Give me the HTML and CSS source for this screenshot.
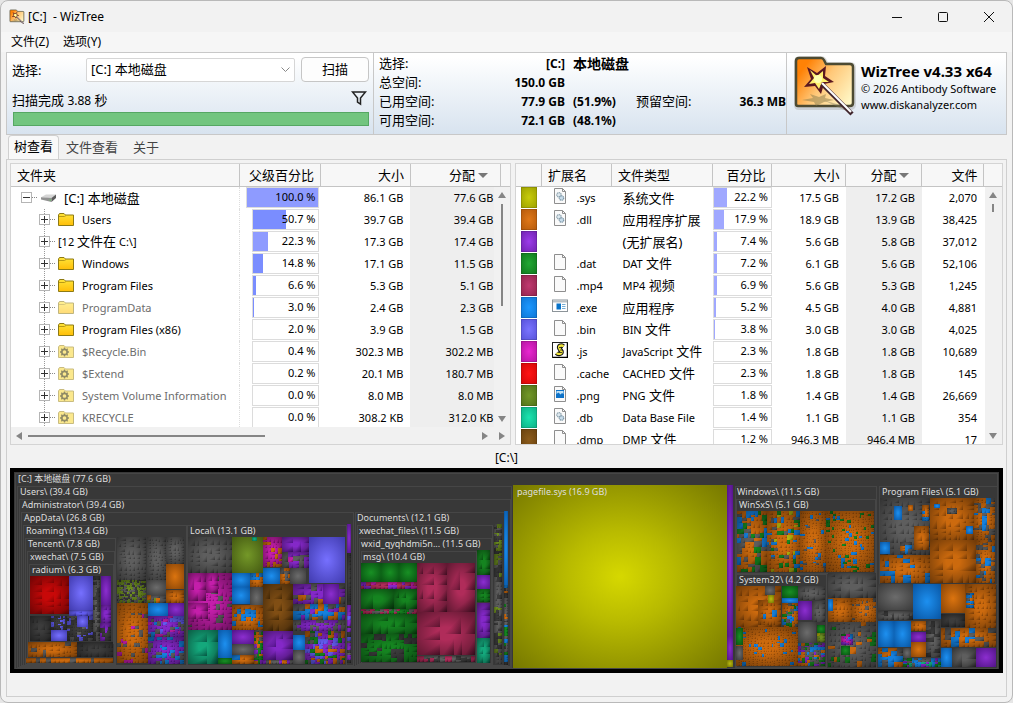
FILE: index.html
```html
<!DOCTYPE html>
<html lang="zh-CN">
<head>
<meta charset="utf-8">
<title>[C:] - WizTree</title>
<link rel="stylesheet" href="styles.css">
</head>
<body>
<svg class="defs" aria-hidden="true">
  <defs>
    <linearGradient id="gFolder" x1="0" y1="0" x2="0" y2="1"><stop offset="0" stop-color="#ffe53a"/><stop offset="1" stop-color="#ffbe08"/></linearGradient>
    <linearGradient id="gLogo" x1="0" y1="0.2" x2="1" y2="0.8"><stop offset="0.1" stop-color="#ff8206"/><stop offset="0.5" stop-color="#ffc879"/><stop offset="1" stop-color="#fff6c4"/></linearGradient>
  </defs>
  <symbol id="folder" viewBox="0 0 16 13">
    <path d="M.5 12.5V2L1.5.5H6L7.5 2H15.5V12.5Z" fill="url(#gFolder)" stroke="#8d7a14"/>
    <path d="M1 3.5H6.5L8 2.5" fill="none" stroke="#b89a16"/>
  </symbol>
  <symbol id="gear" viewBox="0 0 16 13">
    <path d="M.5 12.5V2L1.5.5H6L7.5 2H15.5V12.5Z" fill="#fbe88d" stroke="#c9bc80"/>
    <circle cx="6.5" cy="7" r="2.7" fill="none" stroke="#8f8a66" stroke-width="1.7"/>
    <path d="M6.500 2.500V4M6.500 10V11.500M2 7H3.500M9.500 7H11M3.300 3.800L4.400 4.900M8.600 9.100L9.700 10.200M3.300 10.200L4.400 9.100M8.600 4.900L9.700 3.800" stroke="#8f8a66" stroke-width="1.3"/>
  </symbol>
  <symbol id="drive" viewBox="0 0 15 8">
    <path d="M0 3.200L5 .5H15L10.500 4.500Z" fill="#d6d6d6"/><path d="M0 3.200L10.500 4V8L0 5.500Z" fill="#929292"/><path d="M10.500 4L15 .5V4L10.500 8Z" fill="#5c5c5c"/><path d="M8.500 6h1.500" stroke="#5fd35f"/>
  </symbol>
  <symbol id="page" viewBox="0 0 12 16">
    <path d="M.5.5H8.500L11.500 3.500V15.500H.5Z" fill="#fafafa" stroke="#8e8e8e"/><path d="M8.500.5V3.500H11.500" fill="none" stroke="#8e8e8e"/>
  </symbol>
  <symbol id="cogs" viewBox="0 0 12 16">
    <path d="M.5.5H8.500L11.500 3.500V15.500H.5Z" fill="#fafafa" stroke="#8e8e8e"/><path d="M8.500.5V3.500H11.500" fill="none" stroke="#8e8e8e"/>
    <circle cx="5" cy="6.800" r="2.200" fill="#dce8ef" stroke="#92a5b0" stroke-width="1.300" stroke-dasharray="1.300 .5"/><circle cx="7.500" cy="10" r="2.200" fill="#c7dceb" stroke="#8099a8" stroke-width="1.300" stroke-dasharray="1.300 .5"/>
  </symbol>
  <symbol id="exe" viewBox="0 0 16 13">
    <rect x=".5" y=".5" width="15" height="11.500" fill="#fff" stroke="#8c9499"/><path d="M1 2H15" stroke="#b9c0c4" stroke-width="2"/><rect x="4.500" y="4" width="4.500" height="6" fill="#0873c9"/><path d="M10 5H13.500M10 7H13.500M10 9H13.500" stroke="#75aed6"/>
  </symbol>
  <symbol id="js" viewBox="0 0 16 16">
    <rect x=".5" y=".5" width="15" height="15" fill="#fff" stroke="#222"/><path d="M15.500 1V15.500H1" fill="none" stroke="#000" stroke-width="1.500"/>
    <path d="M11.500 4.500C9 2.500 6 4 7.500 6.500L9.500 9.500C10 12 6 12.500 4.500 11" fill="none" stroke="#111" stroke-width="4.500"/><path d="M11.500 4.500C9 2.500 6 4 7.500 6.500L9.500 9.500C10 12 6 12.500 4.500 11" fill="none" stroke="#efe43a" stroke-width="2.400"/><path d="M7 5.500H11M8 8H11M7 10.500H10" stroke="#222" stroke-width=".8"/>
  </symbol>
  <symbol id="png" viewBox="0 0 12 16">
    <path d="M.5.5H8.500L11.500 3.500V15.500H.5Z" fill="#fafafa" stroke="#8e8e8e"/><path d="M8.500.5V3.500H11.500" fill="none" stroke="#8e8e8e"/><rect x="2" y="4" width="8" height="8" fill="#0d72c8"/><path d="M2.500 5V8L4.500 6.500L6.500 8.500L8 7L9.500 8V5Z" fill="#bfe1f6"/>
  </symbol>
  <symbol id="logo" viewBox="0 0 66 62">
    <path d="M5 49V6Q5 3 8 3H29Q31 3 32 5L34 9H58Q61 9 61 12V48Q61 51 58 51H7Q5 51 5 49Z" fill="none" stroke="#9a9a9a" stroke-width="6" opacity=".35"/>
    <path d="M4 48V5Q4 2 7 2H29Q31 2 32 4L34 8H58Q61 8 61 11V47Q61 50 58 50H6Q4 50 4 48Z" fill="url(#gLogo)" stroke="#4c4a32" stroke-width="2.500"/>
    <path d="M10 44L21 42L18 38L27 41L34 38L33 42L42 44L32 46L24 50L22 46Z" fill="#8a7c4c" opacity=".5"/>
    <path d="M31 44L52 54L62 57L48 49Z" fill="#807a60" opacity=".4"/>
    <path d="M15 11L25 17L34 10L33 20L42 26L32 28L29 38L23 30L12 31L19 23Z" fill="#5b1820"/>
    <path d="M18 14L25 20L31 15L31 22L37 26L30 26L27 33L23 27L17 28L22 22Z" fill="#fff16d"/><circle cx="26" cy="23" r="4" fill="#ffffb0"/>
    <path d="M30 28L60 58" stroke="#40252c" stroke-width="4.400"/><path d="M30 27L59 56" stroke="#fff" stroke-width="2.200"/>
  </symbol>
</svg>

<main class="window">
  <header class="titlebar">
    <svg class="app-icon"><use href="#logo"/></svg>
    <h1 class="title">[C:]&nbsp; - WizTree</h1>
    <div class="win-buttons">
      <button class="win-btn" aria-label="最小化"><svg viewBox="0 0 12 12"><path d="M1 6.500H11"/></svg></button>
      <button class="win-btn" aria-label="最大化"><svg viewBox="0 0 12 12"><rect x="1.500" y="1.500" width="9" height="9" rx="1"/></svg></button>
      <button class="win-btn" aria-label="关闭"><svg viewBox="0 0 12 12"><path d="M1 1L11 11M11 1L1 11"/></svg></button>
    </div>
  </header>
  <nav class="menubar"><button class="menu">文件(Z)</button><button class="menu">选项(Y)</button></nav>

  <section class="summary">
    <div class="scan">
      <div class="scan-row">
        <label for="drive-select">选择:</label>
        <div class="select-wrap">
          <select id="drive-select"><option>[C:] 本地磁盘</option></select>
          <svg class="chevron" viewBox="0 0 9 6"><path d="M.5.5L4.500 4.500L8.500.5"/></svg>
        </div>
        <button class="scan-btn">扫描</button>
      </div>
      <div class="status-row">
        <span>扫描完成 <span class="num">3.88</span> 秒</span>
        <button class="filter" aria-label="筛选"><svg viewBox="0 0 16 16"><path d="M1.500 2H14.500L9.500 8V14L6.500 12V8Z"/></svg></button>
      </div>
      <div class="progress" role="progressbar" aria-valuenow="100" aria-label="扫描进度"></div>
    </div>
    <div class="info">
      <span>选择:</span><b>[C:]</b><b class="cjk">本地磁盘</b><span></span><b></b>
      <span>总空间:</span><b>150.0 GB</b><b></b><span></span><b></b>
      <span>已用空间:</span><b>77.9 GB</b><b>(51.9%)</b><span>预留空间:</span><b>36.3 MB</b>
      <span>可用空间:</span><b>72.1 GB</b><b>(48.1%)</b><span></span><b></b>
    </div>
    <div class="brand">
      <svg class="logo"><use href="#logo"/></svg>
      <div class="brand-text"><strong>WizTree v4.33 x64</strong><span>© 2026 Antibody Software</span><a href="#">www.diskanalyzer.com</a></div>
    </div>
  </section>

  <div class="tabs" role="tablist">
    <button class="tab active" role="tab" aria-selected="true">树查看</button><button class="tab" role="tab">文件查看</button><button class="tab" role="tab">关于</button>
  </div>

  <section class="sheet">
    <div class="panes">
      <div class="pane">
        <div class="view">
        <table class="grid tree">
          <colgroup><col><col class="c81"><col class="c90"><col class="c90 shade"><col class="c10"></colgroup>
          <thead><tr><th class="left">文件夹</th><th>父级百分比</th><th>大小</th><th>分配<i class="sort"></i></th><th></th></tr></thead>
          <tbody>
            <tr><td class="root"><div class="node"><button class="toggle minus" aria-label="折叠"></button><svg class="i-drive"><use href="#drive"/></svg><span class="name big">[C:] 本地磁盘</span></div></td><td><div class="bar wide"><i style="width:100%"></i><span>100.0 %</span></div></td><td>86.1 GB</td><td>77.6 GB</td><td></td></tr>
            <tr><td><div class="node"><button class="toggle" aria-label="展开"></button><svg class="i-folder"><use href="#folder"/></svg><span class="name">Users</span></div></td><td><div class="bar alt"><i style="width:50.7%"></i><span>50.7 %</span></div></td><td>39.7 GB</td><td>39.4 GB</td><td></td></tr>
            <tr><td><div class="node"><button class="toggle" aria-label="展开"></button><span class="name flush">[12 <span class="han">文件在</span> C:\]</span></div></td><td><div class="bar"><i style="width:22.3%"></i><span>22.3 %</span></div></td><td>17.3 GB</td><td>17.4 GB</td><td></td></tr>
            <tr><td><div class="node"><button class="toggle" aria-label="展开"></button><svg class="i-folder"><use href="#folder"/></svg><span class="name">Windows</span></div></td><td><div class="bar alt"><i style="width:14.8%"></i><span>14.8 %</span></div></td><td>17.1 GB</td><td>11.5 GB</td><td></td></tr>
            <tr><td><div class="node"><button class="toggle" aria-label="展开"></button><svg class="i-folder"><use href="#folder"/></svg><span class="name">Program Files</span></div></td><td><div class="bar alt"><i style="width:5%"></i><span>6.6 %</span></div></td><td>5.3 GB</td><td>5.1 GB</td><td></td></tr>
            <tr class="dim"><td><div class="node"><button class="toggle" aria-label="展开"></button><svg class="i-folder"><use href="#folder"/></svg><span class="name">ProgramData</span></div></td><td><div class="bar alt"><i style="width:1.5%"></i><span>3.0 %</span></div></td><td>2.4 GB</td><td>2.3 GB</td><td></td></tr>
            <tr><td><div class="node"><button class="toggle" aria-label="展开"></button><svg class="i-folder"><use href="#folder"/></svg><span class="name">Program Files (x86)</span></div></td><td><div class="bar"><span>2.0 %</span></div></td><td>3.9 GB</td><td>1.5 GB</td><td></td></tr>
            <tr class="dim"><td><div class="node"><button class="toggle" aria-label="展开"></button><svg class="i-gear"><use href="#gear"/></svg><span class="name">$Recycle.Bin</span></div></td><td><div class="bar"><span>0.4 %</span></div></td><td>302.3 MB</td><td>302.2 MB</td><td></td></tr>
            <tr class="dim"><td><div class="node"><button class="toggle" aria-label="展开"></button><svg class="i-gear"><use href="#gear"/></svg><span class="name">$Extend</span></div></td><td><div class="bar"><span>0.2 %</span></div></td><td>20.1 MB</td><td>180.7 MB</td><td></td></tr>
            <tr class="dim"><td><div class="node"><button class="toggle" aria-label="展开"></button><svg class="i-gear"><use href="#gear"/></svg><span class="name">System Volume Information</span></div></td><td><div class="bar"><span>0.0 %</span></div></td><td>8.0 MB</td><td>8.0 MB</td><td></td></tr>
            <tr class="dim"><td><div class="node"><button class="toggle" aria-label="展开"></button><svg class="i-gear"><use href="#gear"/></svg><span class="name">KRECYCLE</span></div></td><td><div class="bar"><span>0.0 %</span></div></td><td>308.2 KB</td><td>312.0 KB</td><td></td></tr>
          </tbody>
        </table>
        <div class="vscroll"><i class="up"></i><i class="thumb long"></i><i class="down"></i></div>
        </div>
        <div class="hscroll"><i class="lt"></i><i class="hthumb"></i><i class="rt"></i><i class="rt"></i></div>
      </div>
      <div class="pane">
        <div class="view">
        <table class="grid ext">
          <colgroup><col class="c25"><col class="c70"><col><col class="c59"><col class="c74"><col class="c76 shade"><col class="c62"><col class="c18"></colgroup>
          <thead><tr><th></th><th class="left">扩展名</th><th class="left">文件类型</th><th>百分比</th><th>大小</th><th>分配<i class="sort"></i></th><th>文件</th><th></th></tr></thead>
          <tbody>
            <tr><td><i class="chip y"></i></td><td><div class="ex"><svg><use href="#cogs"/></svg><span>.sys</span></div></td><td class="kind">系统文件</td><td><div class="bar full"><i style="width:22.2%"></i><span>22.2 %</span></div></td><td>17.5 GB</td><td>17.2 GB</td><td>2,070</td><td></td></tr>
            <tr><td><i class="chip o"></i></td><td><div class="ex"><svg><use href="#cogs"/></svg><span>.dll</span></div></td><td class="kind">应用程序扩展</td><td><div class="bar full"><i style="width:17.9%"></i><span>17.9 %</span></div></td><td>18.9 GB</td><td>13.9 GB</td><td>38,425</td><td></td></tr>
            <tr><td><i class="chip p"></i></td><td></td><td class="kind">(无扩展名)</td><td><div class="bar full"><i style="width:5%"></i><span>7.4 %</span></div></td><td>5.6 GB</td><td>5.8 GB</td><td>37,012</td><td></td></tr>
            <tr><td><i class="chip g"></i></td><td><div class="ex"><svg><use href="#page"/></svg><span>.dat</span></div></td><td class="kind"><span class="lat">DAT</span> 文件</td><td><div class="bar full"><i style="width:5%"></i><span>7.2 %</span></div></td><td>6.1 GB</td><td>5.6 GB</td><td>52,106</td><td></td></tr>
            <tr><td><i class="chip c"></i></td><td><div class="ex"><svg><use href="#page"/></svg><span>.mp4</span></div></td><td class="kind"><span class="lat">MP4</span> 视频</td><td><div class="bar full"><i style="width:5%"></i><span>6.9 %</span></div></td><td>5.6 GB</td><td>5.3 GB</td><td>1,245</td><td></td></tr>
            <tr><td><i class="chip b"></i></td><td><div class="ex"><svg class="w"><use href="#exe"/></svg><span>.exe</span></div></td><td class="kind">应用程序</td><td><div class="bar full"><i style="width:3.500%"></i><span>5.2 %</span></div></td><td>4.5 GB</td><td>4.0 GB</td><td>4,881</td><td></td></tr>
            <tr><td><i class="chip v"></i></td><td><div class="ex"><svg><use href="#page"/></svg><span>.bin</span></div></td><td class="kind"><span class="lat">BIN</span> 文件</td><td><div class="bar full"><i style="width:2%"></i><span>3.8 %</span></div></td><td>3.0 GB</td><td>3.0 GB</td><td>4,025</td><td></td></tr>
            <tr><td><i class="chip m"></i></td><td><div class="ex"><svg class="w"><use href="#js"/></svg><span>.js</span></div></td><td class="kind"><span class="lat">JavaScript</span> 文件</td><td><div class="bar full"><span>2.3 %</span></div></td><td>1.8 GB</td><td>1.8 GB</td><td>10,689</td><td></td></tr>
            <tr><td><i class="chip r"></i></td><td><div class="ex"><svg><use href="#page"/></svg><span>.cache</span></div></td><td class="kind"><span class="lat">CACHED</span> 文件</td><td><div class="bar full"><span>2.3 %</span></div></td><td>1.8 GB</td><td>1.8 GB</td><td>145</td><td></td></tr>
            <tr><td><i class="chip l"></i></td><td><div class="ex"><svg><use href="#png"/></svg><span>.png</span></div></td><td class="kind"><span class="lat">PNG</span> 文件</td><td><div class="bar full"><span>1.8 %</span></div></td><td>1.4 GB</td><td>1.4 GB</td><td>26,669</td><td></td></tr>
            <tr><td><i class="chip t"></i></td><td><div class="ex"><svg><use href="#cogs"/></svg><span>.db</span></div></td><td class="kind"><span class="lat">Data Base File</span></td><td><div class="bar full"><span>1.4 %</span></div></td><td>1.1 GB</td><td>1.1 GB</td><td>354</td><td></td></tr>
            <tr><td><i class="chip n"></i></td><td><div class="ex"><svg><use href="#page"/></svg><span>.dmp</span></div></td><td class="kind"><span class="lat">DMP</span> 文件</td><td><div class="bar full"><span>1.2 %</span></div></td><td>946.3 MB</td><td>946.4 MB</td><td>17</td><td></td></tr>
          </tbody>
        </table>
        <div class="vscroll wide"><i class="up"></i><i class="thumb"></i><i class="down"></i></div>
        </div>
      </div>
    </div>
    <p class="path">[C:\]</p>
    <svg id="treemap" class="treemap" viewBox="10 468 993 205" role="img" aria-label="磁盘空间树状图"></svg>
  </section>
</main>
<script src="treemap.js"></script>
</body>
</html>
```
FILE: styles.css
```css
* { box-sizing: border-box; }
body { margin: 0; background: #e6e6e6; color: #000; font: 12px/16px "Noto Sans", "Noto Sans CJK SC", sans-serif; }
button, select { font: inherit; color: inherit; border: 0; background: none; padding: 0; margin: 0; }
i { font-style: normal; }
svg { display: block; }
.defs { position: absolute; width: 0; height: 0; }
.window { min-height: 703px; border: 1px solid #b9b9b9; border-radius: 8px; background: #f2f2f2; display: flex; flex-direction: column; }
.titlebar { height: 31px; display: flex; align-items: center; padding-left: 8px; }
.app-icon { width: 16px; height: 16px; }
.title { margin: 0 0 0 3px; font-size: 12px; font-weight: 400; flex: 1; }
.win-buttons { display: flex; }
.win-btn { width: 46px; height: 31px; display: flex; align-items: center; justify-content: center; }
.win-btn svg { width: 12px; height: 12px; fill: none; stroke: #111; stroke-width: 1; }
.menubar { height: 20px; background: #f6f6f6; display: flex; gap: 14px; padding-left: 10px; font-size: 12px; }

.summary { display: grid; grid-template-columns: 366px 1fr 219px; gap: 1px; margin: 0 5px; border: 1px solid #c8c8c8; background: #c8c8c8; height: 83px; }
.summary > div { background: linear-gradient(#fff 5%, #eef3f8 45%, #d8e3ef); min-width: 0; overflow: hidden; }
.scan { padding: 4px 4px 0 5px; font-size: 13px; }
.scan-row { display: flex; align-items: center; height: 25px; }
.scan-row label { width: 74px; }
.select-wrap { position: relative; flex: 1; }
.select-wrap select { appearance: none; width: 100%; height: 24px; background: #fff; border: 1px solid #d6d6d6; padding: 0 20px 2px 4px; border-radius: 2px; }
.chevron { position: absolute; right: 5px; top: 9px; width: 9px; height: 6px; fill: none; stroke: #888; }
.scan-btn { margin-left: 6px; width: 68px; height: 25px; background: #fdfdfd; border: 1px solid #c6c6c6; border-radius: 4px; padding-bottom: 1px; }
.status-row { display: flex; justify-content: space-between; align-items: flex-end; height: 24px; margin: 3px 0 3px; }
.num { font-size: 12px; }
.filter { width: 18px; height: 22px; }
.filter svg { width: 16px; height: 16px; fill: none; stroke: #222; stroke-width: 1.5; }
.progress { height: 14px; margin-left: 1px; background: #72c57f; border: 1px solid #55a763; }
.info { display: grid; grid-template-columns: 100px 78px 55px 72px 70px; grid-auto-rows: 19px; column-gap: 8px; padding: 1px 0 0 5px; line-height: 19px; white-space: nowrap; }
.info span, .info .cjk { font-size: 13px; }
.info b:nth-child(5n+2), .info b:nth-child(5n) { text-align: right; }
.info .cjk { font-size: 14px; }
.brand { display: flex; padding: 3px 0 0 5px; }
.logo { width: 66px; height: 62px; margin-right: 3px; flex: none; }
.brand-text { display: flex; flex-direction: column; padding-top: 5px; font-size: 11px; white-space: nowrap; }
.brand-text strong { font-size: 15px; line-height: 20px; }
.brand-text a { color: inherit; text-decoration: none; }

.tabs { display: flex; padding: 0 7px; height: 24px; font-size: 13px; }
.tab { padding: 0 9px 2px; color: #444; }
.tab + .tab { padding: 0 8px 1px 7px; }
.tab.active { color: #000; background: #f9f9f9; border: 1px solid #d0d0d0; border-bottom: 0; border-radius: 4px 4px 0 0; padding: 0 5px 3px; }
.sheet { margin: 0 5px 5px; padding: 3px 3px 22px; border: 1px solid #cfcfcf; flex: 1; }
.panes { display: grid; grid-template-columns: 502fr 488fr; gap: 4px; }
.pane { height: 282px; background: #fff; border: 1px solid #d4d4d4; display: flex; flex-direction: column; min-width: 0; }
.view { position: relative; flex: 1; overflow: hidden; }
.grid { width: 100%; table-layout: fixed; border-collapse: collapse; }
.grid th { height: 22px; padding: 0 6px; font-weight: 400; font-size: 13px; text-align: right; background: #f7f7f7; border-right: 1px solid #c4c4c4; border-bottom: 1px solid #c4c4c4; white-space: nowrap; }
.grid th:last-child { border-right: 0; }
.grid th.left { text-align: left; }
.sort { display: inline-block; margin: 0 6px 2px 3px; border: 5px solid transparent; border-top-color: #777; border-bottom: 0; }
.grid td { height: 22px; padding: 0 7px 0 0; text-align: right; font-size: 11px; white-space: nowrap; overflow: hidden; }
.tree td:first-child { padding: 0; border-right: 1px dotted #ddd; }
.shade { background: #eee; }
.c10 { width: 10px; } .c18 { width: 18px; } .c25 { width: 25px; } .c59 { width: 59px; } .c62 { width: 62px; } .c70 { width: 70px; } .c74 { width: 74px; } .c76 { width: 76px; } .c81 { width: 81px; } .c90 { width: 90px; }
.node { display: flex; align-items: center; height: 22px; padding-left: 28px; background: repeating-linear-gradient(#999 0 1px, transparent 1px 2px) 33px 0 / 1px 22px no-repeat; }
.root .node { padding-left: 10px; background: none; }
.toggle { width: 11px; height: 11px; border: 1px solid #b5b5b5; flex: none; margin-right: 8px; background: linear-gradient(#333, #333) center / 7px 1px no-repeat, linear-gradient(#333, #333) center / 1px 7px no-repeat, #fff; }
.toggle.minus { background: linear-gradient(#333, #333) center / 7px 1px no-repeat, #fff; }
.toggle::after { content: ""; display: block; width: 5px; margin-left: 10px; border-top: 1px dotted #888; }
.i-folder, .i-gear { width: 16px; height: 13px; flex: none; }
.i-drive { width: 15px; height: 8px; margin-left: 1px; }
.name { margin-left: 8px; }
.name.flush { margin-left: 0; }
.name.big { font-size: 13px; }
.han { font-size: 13px; }
.dim td:first-child { color: #6d6d6d; }
.dim .i-folder { opacity: .55; }
.bar { position: relative; height: 21px; margin: 0 -6px 0 12px; border: 1px solid #dcdcdc; background: #fff; }
.bar.wide { margin-left: 6px; }
.bar.full { margin-left: 0; margin-right: -7px; }
.bar i { display: block; height: 100%; background: #8e9bff; }
.bar.alt i { background: #7a8dff; }
.bar.full i { background: #a0a8ff; }
.bar span { position: absolute; right: 3px; top: 1px; }
.vscroll { position: absolute; right: 0; top: 23px; bottom: 0; width: 16px; background: #f1f1f1; display: flex; flex-direction: column; align-items: center; padding: 5px 0; }
.vscroll.wide { width: 17px; }
.up { border: 4px solid transparent; border-top: 0; border-bottom: 6px solid #858585; }
.down { border: 4px solid transparent; border-bottom: 0; border-top: 6px solid #858585; margin-top: auto; }
.thumb { width: 2px; height: 8px; margin-top: 6px; background: #858585; }
.thumb.long { height: 102px; }
.hscroll { height: 17px; background: #f1f1f1; display: flex; align-items: center; padding: 0 5px; }
.lt { border: 4px solid transparent; border-left: 0; border-right: 6px solid #858585; }
.rt { border: 4px solid transparent; border-right: 0; border-left: 6px solid #858585; margin-left: 11px; }
.hthumb { width: 237px; height: 2px; background: #858585; margin: 0 auto 0 6px; }
.grid.ext td:first-child { padding: 0 4px 0 5px; }
.chip { display: block; width: 16px; height: 21px; border: 1px solid rgba(0,0,0,.15); }
.chip.y { background: radial-gradient(#c8cc0a, #a0a400); }
.chip.o { background: radial-gradient(#e07818, #b85c0c); }
.chip.p { background: radial-gradient(#9c3cea, #7424b4); }
.chip.g { background: radial-gradient(#22a834, #127c20); }
.chip.c { background: radial-gradient(#c03a70, #962650); }
.chip.b { background: radial-gradient(#1c98ff, #0f78d8); }
.chip.v { background: radial-gradient(#7a74ff, #5a54dc); }
.chip.m { background: radial-gradient(#e828d0, #b816a4); }
.chip.r { background: radial-gradient(#ff1414, #d80808); }
.chip.l { background: radial-gradient(#729828, #54741a); }
.chip.t { background: radial-gradient(#1ce4b0, #0eb488); }
.chip.n { background: radial-gradient(#8c5c1c, #6c4410); }
.grid.ext td:nth-child(2) { padding: 0; }
.ex { display: flex; align-items: center; height: 22px; padding-left: 13px; }
.ex svg { width: 12px; height: 16px; margin: 0 10px 4px 0; flex: none; }
.ex svg.w { width: 16px; margin-left: -2px; margin-right: 8px; }
.grid td.kind { text-align: left; padding: 0 0 0 11px; font-size: 13px; }
.lat { font-size: 11px; }
.path { margin: 5px 0 2px; text-align: center; line-height: 16px; }
.treemap { width: 100%; height: auto; background: #000; }
.treemap text { font-size: 9px; fill: #dedede; }
.treemap .frame { fill: none; stroke: #464646; }
```
FILE: treemap.js
```js
const NS = "http://www.w3.org/2000/svg";
const map = document.getElementById("treemap");
const add = (parent, tag, attrs) => {
  const el = document.createElementNS(NS, tag);
  for (const k in attrs) el.setAttribute(k, attrs[k]);
  parent.appendChild(el);
  return el;
};

// Cushion tones for each file type: lit centre, flat middle and dark rim.
const tones = {
  r: ["#e81010", "#c80808", "#8c0404"], b: ["#1d90f0", "#1580dc", "#07509c"], v: ["#7670ff", "#625cf0", "#3c36a8"],
  g: ["#189024", "#158420", "#074c10"], o: ["#dc740f", "#cc6a0e", "#804006"], p: ["#8c2ed0", "#8428c8", "#4c1280"],
  m: ["#cc20b0", "#c41eaa", "#700c64"], c: ["#c03464", "#b02c5a", "#5c1430"], t: ["#16b888", "#14a87c", "#06604a"],
  y: ["#bcbc10", "#b4b40c", "#6c6c00"], l: ["#749828", "#6c8c20", "#405410"], n: ["#8c5618", "#804e14", "#482a04"],
  k: ["#6c6c6c", "#5e5e5e", "#363636"], d: ["#484848", "#3c3c3c", "#282828"]
};
const defs = add(map, "defs", {});
for (const k in tones) {
  const deep = add(defs, "radialGradient", { id: "t-" + k, r: 0.75 });
  add(deep, "stop", { offset: 0, "stop-color": tones[k][0] });
  add(deep, "stop", { offset: 1, "stop-color": tones[k][2] });
  const flat = add(defs, "linearGradient", { id: "f-" + k, x2: 1, y2: 1 });
  add(flat, "stop", { offset: 0.6, "stop-color": tones[k][1] });
  add(flat, "stop", { offset: 1, "stop-color": tones[k][2] });
}
const shade = add(defs, "radialGradient", { id: "shade", r: 0.75 });
add(shade, "stop", { offset: 0.2, "stop-color": "#000", "stop-opacity": 0 });
add(shade, "stop", { offset: 1, "stop-color": "#000", "stop-opacity": 0.5 });
const big = add(defs, "radialGradient", { id: "big", r: 0.72 });
add(big, "stop", { offset: 0, "stop-color": "#d6d800" });
add(big, "stop", { offset: 0.35, "stop-color": "#b8ba00" });
add(big, "stop", { offset: 1, "stop-color": "#747600" });

add(map, "rect", { x: 14, y: 472, width: 985, height: 197, fill: "#383838" });

// Folder frames: x, y, width, height.
[[15,473,982,195],[17,486,494,181],[19,499,491,167],[21,512,332,153],[23,525,163,140],[25,538,90,126],
 [27,551,87,112],[29,564,84,79],[187,525,159,140],[355,512,152,153],[357,525,135,139],[359,538,132,125],
 [361,551,115,112],[735,486,141,182],[736,499,139,74],[736,574,90,93],[879,486,118,98]]
  .forEach(f => add(map, "rect", { class: "frame", x: f[0] + .5, y: f[1] + .5, width: f[2], height: f[3] }));

let seed = 7;
const rnd = () => (seed = (seed * 16807) % 2147483647) / 2147483647;

function split(x, y, w, h, cell, mix) {
  if (cell && w * h > cell * cell * (0.7 + rnd() * 1.6) && Math.max(w, h) >= 3) {
    const f = 0.35 + rnd() * 0.3;
    if (w > h) {
      const a = Math.max(1, Math.round(w * f));
      split(x, y, a, h, cell, mix);
      split(x + a, y, w - a, h, cell, mix);
    } else {
      const a = Math.max(1, Math.round(h * f));
      split(x, y, w, a, cell, mix);
      split(x, y + a, w, h - a, cell, mix);
    }
    return;
  }
  const tone = mix[Math.floor(rnd() * mix.length)];
  add(map, "rect", { x, y, width: w, height: h, fill: `url(#${cell ? "f" : "t"}-${tone})` });
}

// Blocks: x, y, width, height, typical cell size (0 = one file), file types.
const blocks = [
  [30,576,39,38,9,"r"],[69,576,24,34,0,"v"],[69,610,24,6,5,"v"],[93,576,7,65,3,"kd"],[101,576,10,29,0,"p"],[101,605,10,18,5,"p"],[100,623,11,18,4,"pdd"],
  [30,616,21,25,7,"d"],[51,616,16,14,2,"vdd"],[51,630,16,11,0,"v"],[67,616,26,25,3,"dddddkv"],[77,616,11,11,0,"v"],
  [28,642,49,15,5,"oooook"],[77,642,36,15,6,"d"],[26,658,87,5,5,"oook"],
  [117,537,29,43,5,"k"],[147,537,19,43,4,"k"],[166,537,18,27,4,"k"],[166,564,18,25,0,"o"],[117,580,29,23,2,"lldk"],[147,580,19,15,0,"k"],[147,595,19,8,4,"tkol"],[166,590,18,13,6,"o"],
  [117,603,31,60,4,"ooooooomk"],[148,603,20,13,0,"b"],[168,603,16,13,0,"p"],[148,616,36,21,4,"pbkvpm"],[148,637,36,27,4,"pppkpb"],
  [188,537,44,36,7,"k"],[232,537,31,36,0,"l"],[252,537,5,4,0,"t"],[263,537,19,30,4,"mmmo"],[282,537,27,15,9,"p"],[282,552,27,16,6,"pkpm"],[309,537,36,46,0,"v"],
  [188,573,44,57,5,"mmmmmmmk"],[188,573,18,28,9,"m"],[206,573,12,20,8,"m"],[188,603,20,16,8,"m"],[232,573,18,14,0,"b"],[232,587,18,17,0,"b"],[250,573,13,14,4,"oob"],[250,587,13,21,0,"k"],
  [263,568,17,16,0,"b"],[280,568,10,16,4,"ook"],[290,568,16,16,0,"k"],[263,584,30,47,12,"n"],[293,584,52,20,6,"pppko"],[323,584,16,20,0,"p"],[293,604,52,16,5,"bkbop"],[293,620,52,11,4,"pkp"],
  [232,605,31,25,4,"oooob"],[188,630,30,34,15,"t"],[218,630,14,28,0,"b"],[218,658,14,6,0,"g"],[232,630,22,14,0,"p"],[232,644,22,11,0,"k"],[254,630,9,34,3,"pkgo"],[232,655,22,9,5,"bo"],
  [263,631,30,29,13,"p"],[263,660,30,4,3,"pok"],[293,635,12,15,0,"b"],[293,650,12,14,0,"k"],[305,631,40,33,4,"ppkvog"],
  [347,524,4,29,0,"p"],[347,553,4,48,4,"d"],[347,601,4,40,4,"vdp"],[347,641,4,22,3,"pdk"],
  [361,563,20,19,0,"g"],[381,563,18,19,0,"g"],[399,563,18,19,0,"g"],[361,582,56,7,4,"ccpm"],[361,589,33,20,16,"g"],[394,589,23,20,9,"g"],[361,609,56,5,3,"cgk"],[361,614,56,20,12,"g"],[361,634,56,28,6,"gggd"],
  [417,563,30,49,15,"c"],[447,563,28,49,19,"c"],[417,612,58,43,19,"c"],[417,656,58,6,4,"dkc"],
  [477,550,13,25,8,"g"],[477,575,13,14,0,"p"],[477,589,13,13,5,"g"],[477,603,13,35,9,"p"],[477,638,13,25,8,"t"],[494,524,8,27,3,"ldk"],[494,551,8,113,4,"kdkdl"],[504,511,4,74,0,"b"],[504,585,4,80,3,"kdgkbo"],
  [727,485,6,151,0,"p"],[727,636,6,24,0,"p"],[727,660,6,7,0,"y"],
  [737,511,30,61,5,"ooookkbg"],[767,511,33,61,4,"oooooooogkyb"],[800,511,26,61,3,"oooooooooooobk"],[826,511,48,61,3,"ooooooooooooooobg"],
  [736,586,45,41,9,"ooooo"],[758,600,23,25,5,"oooooob"],[765,586,10,9,0,"k"],[768,595,6,8,0,"y"],[782,586,16,12,0,"g"],[782,598,16,5,0,"b"],[782,603,16,24,3,"ooogkb"],[798,586,27,14,6,"k"],[798,601,14,19,0,"p"],[812,601,13,21,6,"k"],[798,622,18,21,0,"k"],[817,625,8,8,0,"g"],[817,633,8,9,4,"yl"],
  [736,627,62,39,3,"ooooooooooooooob"],[736,628,7,17,0,"g"],[736,646,7,14,0,"k"],[798,643,27,23,3,"kkgobp"],
  [828,573,48,25,8,"k"],[828,598,24,24,5,"oooooo"],[828,599,5,12,0,"b"],[852,598,24,24,3,"ooook"],[828,622,48,45,5,"kkkkkkgo"],[841,634,12,11,3,"pmbg"],[841,646,9,9,0,"g"],
  [880,498,50,57,7,"k"],[894,506,8,14,0,"b"],[908,505,5,6,0,"o"],[922,505,7,16,3,"okb"],[914,526,15,24,6,"o"],[880,542,10,12,0,"b"],[900,542,12,12,4,"bko"],
  [930,498,44,42,8,"oooo"],[974,498,21,42,4,"oooobk"],[934,504,6,4,0,"b"],[947,508,10,6,4,"k"],[966,526,7,8,0,"b"],[930,540,46,43,12,"o"],[976,540,19,43,4,"ooobk"],[880,555,50,28,5,"oooob"],
  [878,584,35,26,0,"k"],[878,611,35,9,5,"kkd"],[913,584,28,35,0,"b"],[941,584,24,29,0,"o"],[941,614,24,13,8,"d"],[965,584,31,44,6,"oooo"],[966,593,8,15,3,"bok"],
  [878,621,16,26,0,"b"],[894,621,17,26,0,"b"],[911,621,17,10,5,"o"],[911,632,15,10,0,"p"],[911,642,15,15,0,"o"],[926,621,14,36,5,"kkd"],
  [941,628,55,19,5,"oooobk"],[878,648,25,19,5,"oobk"],[903,648,8,10,0,"k"],[903,658,38,9,3,"bpkgt"],[941,648,11,19,0,"b"],[952,648,24,19,12,"k"],[976,648,20,19,0,"p"]
];
for (const [x, y, w, h, cell, mix] of blocks) {
  split(x, y, w, h, cell, mix);
  if (cell) add(map, "rect", { x, y, width: w, height: h, fill: "url(#shade)" });
}
add(map, "rect", { x: 513, y: 485, width: 214, height: 183, fill: "url(#big)" });

// Folder captions: x, baseline, text.
[[18,482,"[C:] 本地磁盘  (77.6 GB)"],[20,495,"Users\\ (39.4 GB)"],[22,508,"Administrator\\ (39.4 GB)"],[24,521,"AppData\\ (26.8 GB)"],
 [26,534,"Roaming\\ (13.4 GB)"],[28,547,"Tencent\\ (7.8 GB)"],[30,560,"xwechat\\ (7.5 GB)"],[32,573,"radium\\ (6.3 GB)"],
 [190,534,"Local\\ (13.1 GB)"],[357,521,"Documents\\ (12.1 GB)"],[359,534,"xwechat_files\\ (11.5 GB)"],[361,547,"wxid_qyqhdmi5n... (11.5 GB)"],
 [363,560,"msg\\ (10.4 GB)"],[517,495,"pagefile.sys (16.9 GB)"],[737,495,"Windows\\ (11.5 GB)"],[739,508,"WinSxS\\ (5.1 GB)"],
 [739,583,"System32\\ (4.2 GB)"],[882,495,"Program Files\\ (5.1 GB)"]]
  .forEach(([x, y, s]) => { add(map, "text", { x, y }).textContent = s; });
```
